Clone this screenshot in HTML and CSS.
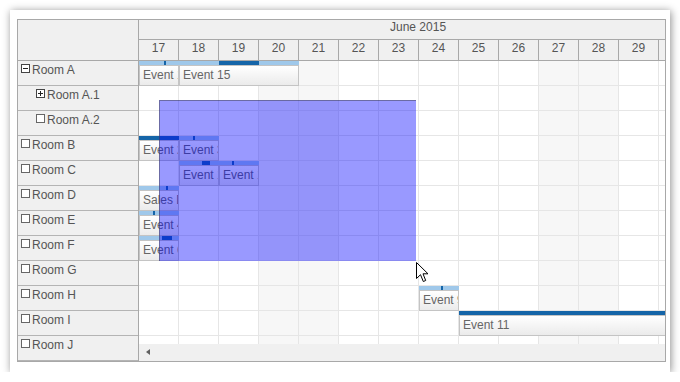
FILE: index.html
```html
<!DOCTYPE html>
<html>
<head>
<meta charset="utf-8">
<title>Scheduler</title>
<link rel="stylesheet" href="styles.css">
</head>
<body>
<div class="card">
  <div class="scheduler">
    <div class="side">
      <div class="corner"></div>
      <div class="rh"><svg class="ico" width="9" height="9" viewBox="0 0 9 9"><rect x="0.5" y="0.5" width="8" height="8" fill="#fff" stroke="#444"/><path d="M2 4.5h5" stroke="#222"/></svg><span>Room A</span></div>
      <div class="rh child"><svg class="ico" width="9" height="9" viewBox="0 0 9 9"><rect x="0.5" y="0.5" width="8" height="8" fill="#fff" stroke="#444"/><path d="M2 4.5h5M4.5 2v5" stroke="#222"/></svg><span>Room A.1</span></div>
      <div class="rh child"><svg class="ico" width="9" height="9" viewBox="0 0 9 9"><rect x="0.5" y="0.5" width="8" height="8" fill="#fff" stroke="#666"/></svg><span>Room A.2</span></div>
      <div class="rh"><svg class="ico" width="9" height="9" viewBox="0 0 9 9"><rect x="0.5" y="0.5" width="8" height="8" fill="#fff" stroke="#666"/></svg><span>Room B</span></div>
      <div class="rh"><svg class="ico" width="9" height="9" viewBox="0 0 9 9"><rect x="0.5" y="0.5" width="8" height="8" fill="#fff" stroke="#666"/></svg><span>Room C</span></div>
      <div class="rh"><svg class="ico" width="9" height="9" viewBox="0 0 9 9"><rect x="0.5" y="0.5" width="8" height="8" fill="#fff" stroke="#666"/></svg><span>Room D</span></div>
      <div class="rh"><svg class="ico" width="9" height="9" viewBox="0 0 9 9"><rect x="0.5" y="0.5" width="8" height="8" fill="#fff" stroke="#666"/></svg><span>Room E</span></div>
      <div class="rh"><svg class="ico" width="9" height="9" viewBox="0 0 9 9"><rect x="0.5" y="0.5" width="8" height="8" fill="#fff" stroke="#666"/></svg><span>Room F</span></div>
      <div class="rh"><svg class="ico" width="9" height="9" viewBox="0 0 9 9"><rect x="0.5" y="0.5" width="8" height="8" fill="#fff" stroke="#666"/></svg><span>Room G</span></div>
      <div class="rh"><svg class="ico" width="9" height="9" viewBox="0 0 9 9"><rect x="0.5" y="0.5" width="8" height="8" fill="#fff" stroke="#666"/></svg><span>Room H</span></div>
      <div class="rh"><svg class="ico" width="9" height="9" viewBox="0 0 9 9"><rect x="0.5" y="0.5" width="8" height="8" fill="#fff" stroke="#666"/></svg><span>Room I</span></div>
      <div class="rh"><svg class="ico" width="9" height="9" viewBox="0 0 9 9"><rect x="0.5" y="0.5" width="8" height="8" fill="#fff" stroke="#666"/></svg><span>Room J</span></div>
    </div>
    <div class="main">
      <div class="months"><span>June 2015</span></div>
      <div class="days">
        <div class="day">17</div><div class="day">18</div><div class="day">19</div><div class="day">20</div>
        <div class="day">21</div><div class="day">22</div><div class="day">23</div><div class="day">24</div>
        <div class="day">25</div><div class="day">26</div><div class="day">27</div><div class="day">28</div>
        <div class="day">29</div><div class="day">30</div>
      </div>
      <div class="grid">
        <div class="row">
          <div class="ev" style="left:0;width:40px"><div class="bar"><i style="left:25px;width:2px"></i></div><div class="box">Event 1</div></div>
          <div class="ev" style="left:40px;width:120px"><div class="bar"><i style="left:40px;width:40px"></i></div><div class="box">Event 15</div></div>
        </div>
        <div class="row"></div>
        <div class="row"></div>
        <div class="row">
          <div class="ev" style="left:0;width:40px"><div class="bar"><i style="left:0;width:40px"></i></div><div class="box">Event 2</div></div>
          <div class="ev" style="left:40px;width:40px"><div class="bar"><i style="left:14px;width:2px"></i></div><div class="box">Event 3</div></div>
        </div>
        <div class="row">
          <div class="ev" style="left:40px;width:40px"><div class="bar"><i style="left:23px;width:8px"></i></div><div class="box">Event 12</div></div>
          <div class="ev" style="left:80px;width:40px"><div class="bar"><i style="left:13px;width:2px"></i></div><div class="box">Event 13</div></div>
        </div>
        <div class="row">
          <div class="ev" style="left:0;width:40px"><div class="bar"><i style="left:27px;width:2px"></i></div><div class="box">Sales Day</div></div>
        </div>
        <div class="row">
          <div class="ev" style="left:0;width:40px"><div class="bar"><i style="left:14px;width:2px"></i></div><div class="box">Event 4</div></div>
        </div>
        <div class="row">
          <div class="ev" style="left:0;width:40px"><div class="bar"><i style="left:23px;width:10px"></i></div><div class="box">Event 6</div></div>
        </div>
        <div class="row"></div>
        <div class="row">
          <div class="ev" style="left:280px;width:40px"><div class="bar"><i style="left:22px;width:2px"></i></div><div class="box">Event 9</div></div>
        </div>
        <div class="row">
          <div class="ev" style="left:320px;width:230px"><div class="bar"><i style="left:0;width:230px"></i></div><div class="box">Event 11</div></div>
        </div>
        <div class="row"></div>
        <div class="sel"></div>
        <svg class="cursor" width="13" height="21" viewBox="0 0 13 21"><path d="M0.5 0.5 L0.5 16.5 L4.5 12.7 L7.3 19.5 L9.7 18.5 L7 11.8 L12 11.8 Z" fill="#fff" stroke="#000" stroke-width="1" stroke-linejoin="miter"/></svg>
      </div>
      <div class="hscroll"><span class="arrow"></span></div>
    </div>
  </div>
</div>
</body>
</html>
```

FILE: styles.css
```css
* { box-sizing: border-box; }

body {
  margin: 0;
  background: #fff;
  font-family: "Liberation Sans", Arial, sans-serif;
  font-size: 12px;
  color: #555;
}

.card {
  margin: 10px 0 0 10px;
  width: 660px;
  height: 362px;
  padding: 9px 0 0 7px;
  background: #fff;
  box-shadow: 1px 1px 8px rgba(0, 0, 0, 0.45);
}

.scheduler {
  display: flex;
  width: 649px;
  height: 343px;
  border: 1px solid #a8a8a8;
}

.side {
  width: 121px;
  flex: none;
  background: #f0f0f0;
  border-right: 1px solid #a8a8a8;
}

.corner {
  height: 41px;
  border-bottom: 1px solid #a8a8a8;
}

.rh {
  height: 25px;
  border-bottom: 1px solid #b4b4b4;
  padding: 2px 0 0 3px;
  display: flex;
  align-items: flex-start;
  line-height: 14px;
  white-space: nowrap;
}

.rh.child { padding-left: 18px; }

.ico {
  flex: none;
  margin: 1px 2px 0 0;
  display: block;
}

.main {
  flex: 1;
  min-width: 0;
  overflow: hidden;
  display: flex;
  flex-direction: column;
}

.months {
  flex: none;
  height: 20px;
  border-bottom: 1px solid #a8a8a8;
  background: #f0f0f0;
  padding-left: 251px;
  line-height: 14px;
  white-space: nowrap;
}

.days {
  flex: none;
  height: 21px;
  border-bottom: 1px solid #a8a8a8;
  background: #f0f0f0;
  display: flex;
}

.day {
  flex: none;
  width: 40px;
  border-right: 1px solid #a8a8a8;
  text-align: center;
  padding-top: 1px;
  line-height: 14px;
}

.grid {
  flex: none;
  height: 283px;
  position: relative;
  overflow: hidden;
  background:
    repeating-linear-gradient(90deg, transparent 0 39px, #e6e6e6 39px 40px),
    linear-gradient(90deg, #fff 0 120px, #f7f7f7 120px 200px, #fff 200px 400px, #f7f7f7 400px 480px, #fff 480px);
}

.row {
  height: 25px;
  border-bottom: 1px solid #e6e6e6;
  position: relative;
}

.ev {
  position: absolute;
  top: 0;
  height: 25px;
  overflow: hidden;
}

.bar {
  height: 4px;
  background: #9fc8ea;
  position: relative;
}

.bar i {
  position: absolute;
  top: 0;
  height: 4px;
  background: #1565a8;
}

.box {
  height: 21px;
  border: 1px solid #c4c4c4;
  background: linear-gradient(#ffffff, #ebebeb);
  padding: 2px 0 0 3px;
  line-height: 14px;
  white-space: nowrap;
  overflow: hidden;
  color: #666;
}

.sel {
  position: absolute;
  left: 20px;
  top: 39px;
  width: 257px;
  height: 161px;
  background: rgba(0, 0, 255, 0.4);
  border-top: 1px solid rgba(70, 70, 90, 0.55);
  border-left: 1px solid rgba(70, 70, 90, 0.55);
}

.cursor {
  position: absolute;
  left: 277px;
  top: 201px;
}

.hscroll {
  flex: none;
  height: 17px;
  background: #f0f0f0;
  position: relative;
}

.arrow {
  position: absolute;
  left: 7px;
  top: 5px;
  width: 0;
  height: 0;
  border-right: 4px solid #606060;
  border-top: 3px solid transparent;
  border-bottom: 3px solid transparent;
}
```
